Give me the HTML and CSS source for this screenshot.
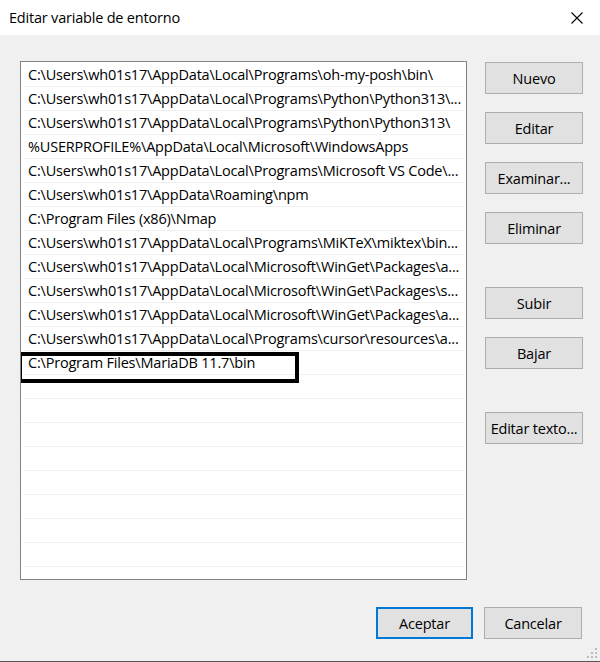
FILE: index.html
```html
<!DOCTYPE html>
<html lang="es">
<head>
    <meta charset="UTF-8">
    <title>Editar variable de entorno</title>
    <link rel="stylesheet" href="styles.css">
</head>
<body>
    <div class="dialog">
        <div class="titlebar">
            <span class="title">Editar variable de entorno</span>
            <svg class="close" width="12" height="12" viewBox="0 0 12 12">
                <path d="M0.5 0.5 L11.5 11.5 M11.5 0.5 L0.5 11.5" stroke="#000" stroke-width="1.1" fill="none"/>
            </svg>
        </div>

        <div class="content">
            <div class="main">
                <div class="list">
                    <div class="row">C:\Users\wh01s17\AppData\Local\Programs\oh-my-posh\bin\</div>
                    <div class="row">C:\Users\wh01s17\AppData\Local\Programs\Python\Python313\...</div>
                    <div class="row">C:\Users\wh01s17\AppData\Local\Programs\Python\Python313\</div>
                    <div class="row">%USERPROFILE%\AppData\Local\Microsoft\WindowsApps</div>
                    <div class="row">C:\Users\wh01s17\AppData\Local\Programs\Microsoft VS Code\...</div>
                    <div class="row">C:\Users\wh01s17\AppData\Roaming\npm</div>
                    <div class="row">C:\Program Files (x86)\Nmap</div>
                    <div class="row">C:\Users\wh01s17\AppData\Local\Programs\MiKTeX\miktex\bin...</div>
                    <div class="row">C:\Users\wh01s17\AppData\Local\Microsoft\WinGet\Packages\a...</div>
                    <div class="row">C:\Users\wh01s17\AppData\Local\Microsoft\WinGet\Packages\s...</div>
                    <div class="row">C:\Users\wh01s17\AppData\Local\Microsoft\WinGet\Packages\a...</div>
                    <div class="row">C:\Users\wh01s17\AppData\Local\Programs\cursor\resources\a...</div>
                    <div class="row">C:\Program Files\MariaDB 11.7\bin</div>
                    <div class="row"></div>
                    <div class="row"></div>
                    <div class="row"></div>
                    <div class="row"></div>
                    <div class="row"></div>
                    <div class="row"></div>
                    <div class="row"></div>
                    <div class="row"></div>
                    <div class="row"></div>
                    <!-- annotation box drawn over the new entry -->
                    <div class="mark"></div>
                </div>

                <div class="side">
                    <button class="btn">Nuevo</button>
                    <button class="btn">Editar</button>
                    <button class="btn">Examinar...</button>
                    <button class="btn">Eliminar</button>
                    <button class="btn gap">Subir</button>
                    <button class="btn">Bajar</button>
                    <button class="btn gap">Editar texto...</button>
                </div>
            </div>

            <div class="footer">
                <button class="btn default">Aceptar</button>
                <button class="btn">Cancelar</button>
            </div>

            <svg class="grip" width="12" height="12" viewBox="0 0 12 12">
                <rect x="9" y="1" width="2" height="2" fill="#bdbdbd"/>
                <rect x="5" y="5" width="2" height="2" fill="#bdbdbd"/>
                <rect x="9" y="5" width="2" height="2" fill="#bdbdbd"/>
                <rect x="1" y="9" width="2" height="2" fill="#bdbdbd"/>
                <rect x="5" y="9" width="2" height="2" fill="#bdbdbd"/>
                <rect x="9" y="9" width="2" height="2" fill="#bdbdbd"/>
            </svg>
        </div>
    </div>
</body>
</html>
```

FILE: styles.css
```css
body {
    margin: 0;
    padding: 0;
    font-family: "Open Sans", "Noto Sans", sans-serif;
    color: #000;
}

.dialog {
    width: 600px;
    height: 662px;
    display: flex;
    flex-direction: column;
    background: #f0f0f0;
    border-bottom: 1px solid #555;
    box-sizing: border-box;
}

.titlebar {
    height: 35px;
    background: #fff;
    display: flex;
    align-items: center;
    justify-content: space-between;
    padding: 0 17px 0 9px;
    flex-shrink: 0;
}

.title {
    font-size: 14.5px;
    letter-spacing: -0.2px;
}

.close {
    display: block;
}

.content {
    position: relative;
    flex: 1;
    padding: 26px 17px 0 20px;
}

.main {
    display: flex;
    gap: 18px;
}

.list {
    position: relative;
    width: 447px;
    height: 519px;
    flex-shrink: 0;
    box-sizing: border-box;
    border: 1px solid #828282;
    background: #fff;
    padding: 1px 3px 0 2px;
    overflow: hidden;
}

.row {
    height: 24px;
    box-sizing: border-box;
    border-bottom: 1px solid #f0f0f0;
    padding-left: 5px;
    font-size: 14.5px;
    letter-spacing: -0.2px;
    line-height: 24px;
    white-space: nowrap;
    overflow: hidden;
}

.mark {
    position: absolute;
    left: -3px;
    top: 290px;
    width: 281px;
    height: 31px;
    border: 4px solid #000;
    box-sizing: border-box;
}

.side {
    display: flex;
    flex-direction: column;
    gap: 18px;
    padding-top: 1px;
}

.btn {
    width: 98px;
    height: 32px;
    box-sizing: border-box;
    background: #e1e1e1;
    border: 1px solid #adadad;
    font-family: "Open Sans", "Noto Sans", sans-serif;
    font-size: 14.5px;
    letter-spacing: -0.2px;
    color: #000;
    padding: 0;
}

.btn.gap {
    margin-top: 25px;
}

.btn.default {
    width: 97px;
    border: 2px solid #0078d7;
}

.footer {
    display: flex;
    justify-content: flex-end;
    gap: 11px;
    margin-top: 27px;
    padding-right: 1px;
}

.grip {
    position: absolute;
    right: 2px;
    bottom: 2px;
}
```
